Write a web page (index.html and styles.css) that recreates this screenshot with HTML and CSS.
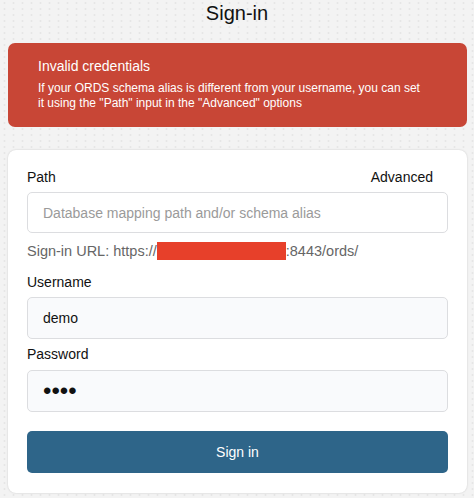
FILE: index.html
```html
<!DOCTYPE html>
<html lang="en">
<head>
<meta charset="utf-8">
<title>Sign-in</title>
<link rel="stylesheet" href="styles.css">
</head>
<body>
<h1 class="title">Sign-in</h1>
<div class="alert">
  <div class="alert-title">Invalid credentials</div>
  <div class="alert-body">If your ORDS schema alias is different from your username, you can set it using the "Path" input in the "Advanced" options</div>
</div>
<form class="card">
  <div class="label-row">
    <label class="label">Path</label>
    <span class="advanced">Advanced</span>
  </div>
  <input class="field field-path" type="text" placeholder="Database mapping path and/or schema alias">
  <div class="url">Sign-in URL: https://<span class="redact"></span>:8443/ords/</div>
  <label class="label label-user">Username</label>
  <input class="field field-filled" type="text" value="demo">
  <label class="label label-pass">Password</label>
  <input class="field field-filled field-pass" type="password" value="demo">
  <button class="btn" type="button">Sign in</button>
</form>
</body>
</html>
```
FILE: styles.css
```css
html, body {
  margin: 0;
  padding: 0;
}
body {
  font-family: "Liberation Sans", Arial, sans-serif;
  color: #111;
  background-color: #f3f3f3;
  background-image: radial-gradient(circle, #e6e6e6 0.9px, transparent 1.2px);
  background-size: 9px 6px;
  width: 474px;
  height: 498px;
  overflow: hidden;
}
.title {
  margin: 0;
  padding-top: 2px;
  font-size: 20px;
  line-height: 23px;
  font-weight: normal;
  text-align: center;
  color: #111;
}
.alert {
  margin: 18px 7px 0 8px;
  background: #c84636;
  color: #fff;
  border-radius: 7px;
  padding: 15px 44px 15px 30px;
  height: 84px;
  box-sizing: border-box;
}
.alert-title {
  font-size: 14px;
  line-height: 16px;
}
.alert-body {
  margin-top: 7px;
  font-size: 12px;
  line-height: 15px;
}
.card {
  margin: 23px 7px 0 8px;
  background: #fff;
  border-radius: 8px;
  box-shadow: 0 0 2px rgba(0, 0, 0, 0.18);
  padding: 19px 19px 20px 19px;
  display: flex;
  flex-direction: column;
}
.label-row {
  display: flex;
  justify-content: space-between;
  margin-bottom: 7px;
}
.label {
  font-size: 14px;
  line-height: 16px;
  color: #111;
}
.advanced {
  font-size: 14px;
  line-height: 16px;
  margin-right: 15px;
  color: #111;
}
.field {
  display: block;
  box-sizing: border-box;
  width: 100%;
  height: 41px;
  margin: 0;
  border: 1px solid #dcdde0;
  border-radius: 5px;
  padding: 0 15px;
  font-family: "Liberation Sans", Arial, sans-serif;
  font-size: 14px;
  color: #111;
  background: #fff;
  outline: none;
}
.field::placeholder {
  color: #9a9a9a;
}
.field-filled {
  background: #f9fafc;
  height: 42px;
}
.field-pass {
  font-size: 24px;
  letter-spacing: 0;
}
.url {
  margin-top: 9px;
  font-size: 14.5px;
  line-height: 18px;
  color: #666;
}
.redact {
  display: inline-block;
  width: 129px;
  height: 18px;
  vertical-align: -4px;
  background: #e7402a;
}
.label-user {
  margin-top: 14px;
  margin-bottom: 7px;
}
.label-pass {
  margin-top: 7px;
  margin-bottom: 8px;
}
.btn {
  margin-top: 19px;
  height: 42px;
  border: none;
  border-radius: 5px;
  background: #2e6589;
  color: #fff;
  font-family: "Liberation Sans", Arial, sans-serif;
  font-size: 14px;
}
```
